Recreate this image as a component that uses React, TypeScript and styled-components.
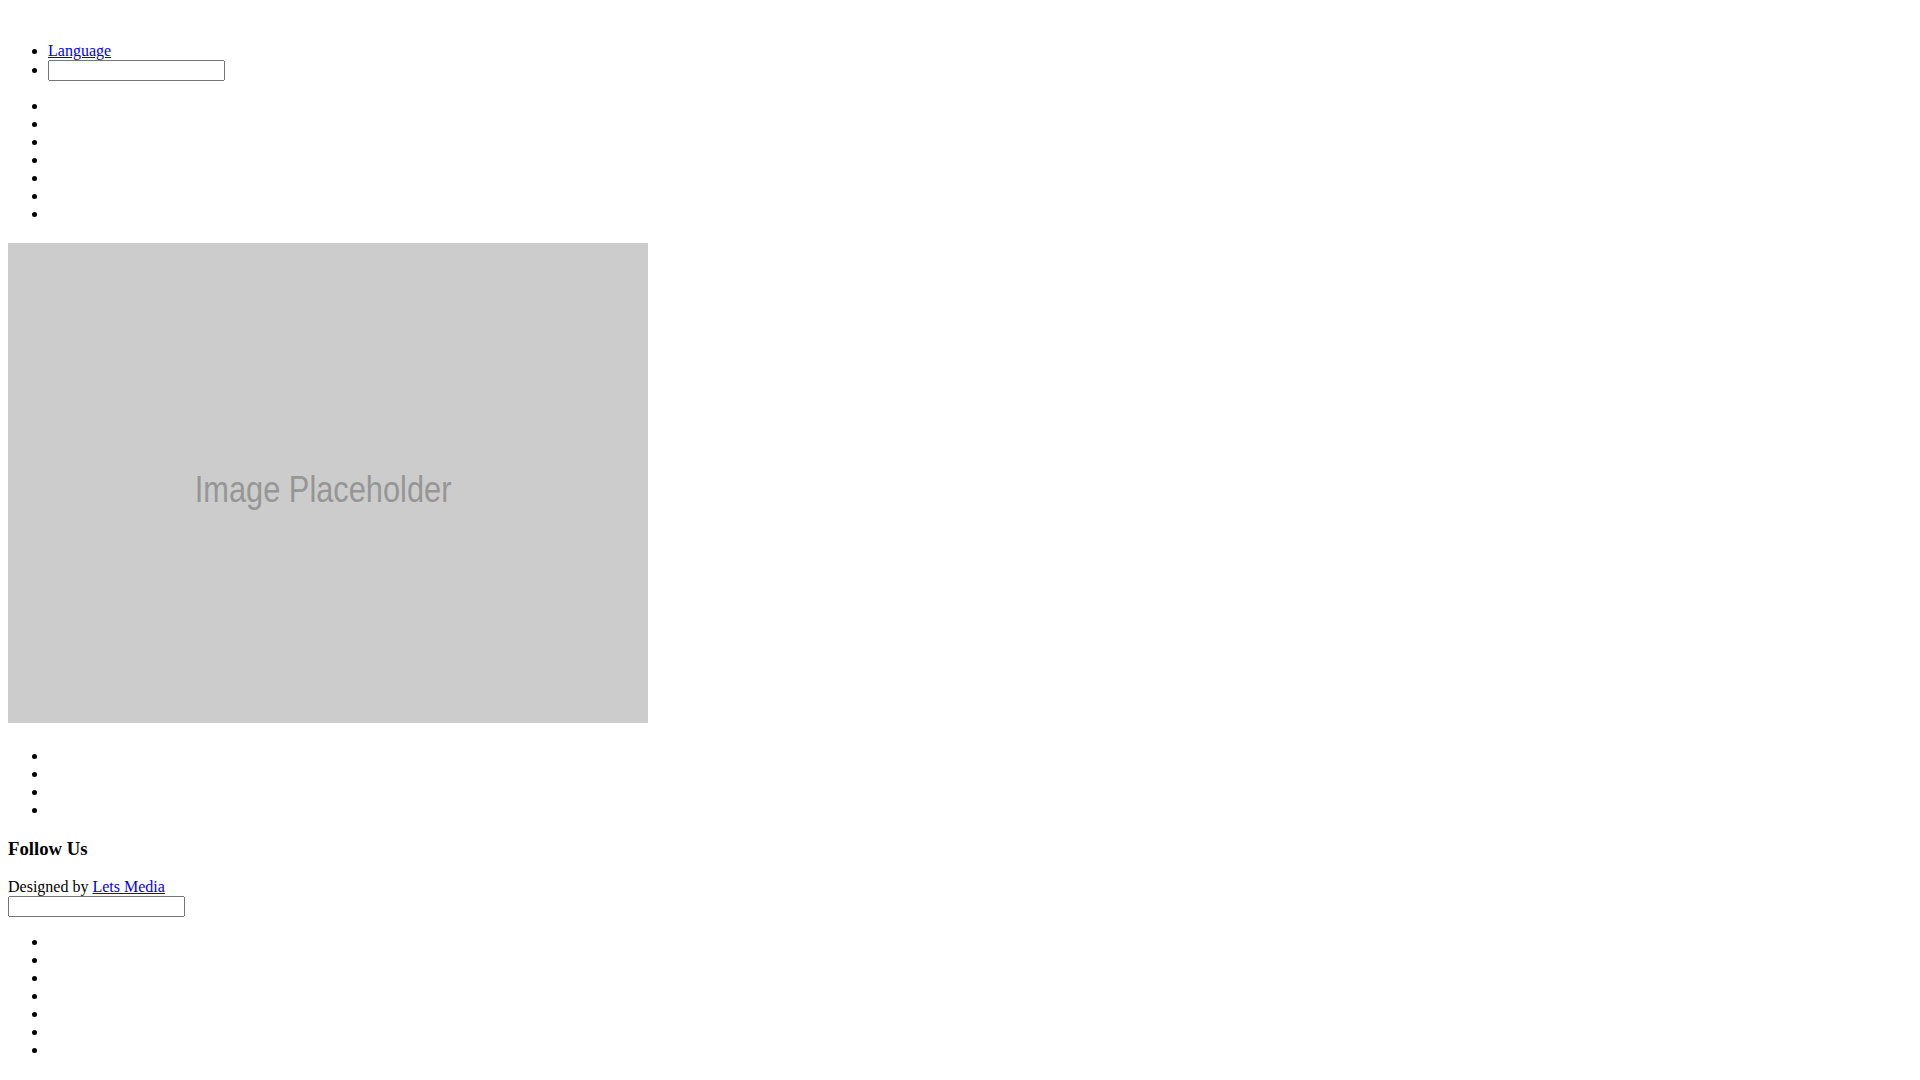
import React from 'react';
import styled, { createGlobalStyle } from 'styled-components';

const GlobalStyle = createGlobalStyle`
  body {
    margin: 8px;
    background: #fff;
    color: #000;
    font-family: 'Liberation Serif', 'Times New Roman', serif;
    font-size: 16px;
  }
`;

const mainNav = ['home', 'about', 'services', 'portfolio', 'blog', 'team', 'contact'];
const slideDots = ['slide-1', 'slide-2', 'slide-3', 'slide-4'];
const footerNav = ['facebook', 'twitter', 'google', 'linkedin', 'pinterest', 'youtube', 'rss'];

const App = () => {
  return (
    <>
      <GlobalStyle/>
      <Header>
        <Brand/>
        <List>
          <Item><TextLink href="#">Language</TextLink></Item>
          <Item><SearchInput type="text" aria-label="Search"/></Item>
        </List>
        <List>
          {mainNav.map((name) => <Item key={name} data-name={name}/>)}
        </List>
      </Header>
      <Slider>
        <Placeholder>
          <PlaceholderText>Image Placeholder</PlaceholderText>
        </Placeholder>
        <DotList>
          {slideDots.map((name) => <Item key={name} data-name={name}/>)}
        </DotList>
      </Slider>
      <Footer>
        <FooterTitle>Follow Us</FooterTitle>
        <Credits>Designed by <TextLink href="#">Lets Media</TextLink></Credits>
        <div><SearchInput type="text" aria-label="Newsletter"/></div>
        <List>
          {footerNav.map((name) => <Item key={name} data-name={name}/>)}
        </List>
      </Footer>
    </>
  );
}

const Header = styled.header`
  display: block;
`;
const Brand = styled.div`
  height: 18px;
`;
const List = styled.ul`
  margin: 16px 0;
  padding-left: 40px;
  list-style: disc;
`;
const DotList = styled(List)`
  margin-top: 24px;
`;
const Item = styled.li`
  min-height: 18px;
`;
const TextLink = styled.a`
  color: #0000ee;
  text-decoration: underline;
`;
const SearchInput = styled.input`
  box-sizing: border-box;
  width: 177px;
`;
const Slider = styled.section`
  display: block;
`;
const Placeholder = styled.div`
  width: 640px;
  height: 480px;
  margin-top: 20px;
  background: #cccccc;
  display: flex;
  align-items: center;
  justify-content: center;
  padding: 13px 10px 0 0;
  box-sizing: border-box;
`;
const PlaceholderText = styled.span`
  font-family: 'Liberation Sans', Arial, sans-serif;
  font-size: 36px;
  color: #969696;
  transform: scaleX(0.855);
`;
const Footer = styled.footer`
  display: block;
`;
const FooterTitle = styled.h3`
  font-size: 18.72px;
  font-weight: bold;
  margin: 18.72px 0;
`;
const Credits = styled.div`
  line-height: normal;
`;

export default App;
